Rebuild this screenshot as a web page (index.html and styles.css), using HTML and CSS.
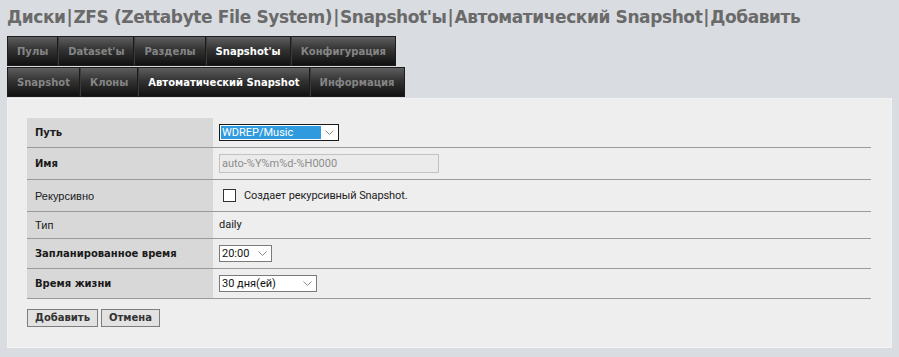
FILE: index.html
```html
<!DOCTYPE html>
<html lang="ru">
<head>
  <meta charset="UTF-8" />
  <title>Автоматический Snapshot - Добавить</title>
  <link rel="stylesheet" href="styles.css">
</head>
<body>
  <h1 class="page-title">Диски<span class="sep">|</span>ZFS (Zettabyte File System)<span class="sep">|</span>Snapshot'ы<span class="sep">|</span>Автоматический Snapshot<span class="sep">|</span>Добавить</h1>

  <div class="tabs">
    <ul class="tab-row">
      <li class="tab">Пулы</li>
      <li class="tab">Dataset'ы</li>
      <li class="tab">Разделы</li>
      <li class="tab active">Snapshot'ы</li>
      <li class="tab">Конфигурация</li>
    </ul>
    <ul class="tab-row">
      <li class="tab">Snapshot</li>
      <li class="tab">Клоны</li>
      <li class="tab active">Автоматический Snapshot</li>
      <li class="tab">Информация</li>
    </ul>
  </div>

  <div class="panel">
    <table class="form-table">
      <tr class="row-path">
        <td class="label bold">Путь</td>
        <td class="value">
          <div class="dropdown focused w-path">
            <span class="dd-value selected">WDREP/Music</span>
            <span class="dd-arrow"><svg width="9" height="5" viewBox="0 0 9 5"><path d="M0.5 0.5 L4.5 4.5 L8.5 0.5" fill="none" stroke="#8a8a8a" stroke-width="1"/></svg></span>
          </div>
        </td>
      </tr>
      <tr class="row-name">
        <td class="label bold">Имя</td>
        <td class="value">
          <input class="text-input" type="text" value="auto-%Y%m%d-%H0000" disabled>
        </td>
      </tr>
      <tr class="row-rec">
        <td class="label">Рекурсивно</td>
        <td class="value">
          <label class="check"><span class="check-box"></span>Создает рекурсивный Snapshot.</label>
        </td>
      </tr>
      <tr class="row-type">
        <td class="label">Тип</td>
        <td class="value plain">daily</td>
      </tr>
      <tr class="row-time">
        <td class="label bold">Запланированное время</td>
        <td class="value">
          <div class="dropdown w-time">
            <span class="dd-value">20:00</span>
            <span class="dd-arrow"><svg width="9" height="5" viewBox="0 0 9 5"><path d="M0.5 0.5 L4.5 4.5 L8.5 0.5" fill="none" stroke="#8a8a8a" stroke-width="1"/></svg></span>
          </div>
        </td>
      </tr>
      <tr class="row-life">
        <td class="label bold">Время жизни</td>
        <td class="value">
          <div class="dropdown w-life">
            <span class="dd-value">30 дня(ей)</span>
            <span class="dd-arrow"><svg width="9" height="5" viewBox="0 0 9 5"><path d="M0.5 0.5 L4.5 4.5 L8.5 0.5" fill="none" stroke="#8a8a8a" stroke-width="1"/></svg></span>
          </div>
        </td>
      </tr>
    </table>

    <div class="actions">
      <button class="btn">Добавить</button>
      <button class="btn">Отмена</button>
    </div>
  </div>
</body>
</html>
```

FILE: styles.css
```css
* {
  box-sizing: border-box;
}

body {
  margin: 0;
  padding: 6px 7px 0 7px;
  background-color: #d9dce0;
  font-family: "DejaVu Sans", Verdana, sans-serif;
  color: #222;
}

/* Заголовок */
.page-title {
  margin: 0;
  font-size: 17px;
  line-height: 22px;
  letter-spacing: -0.4px;
  font-weight: bold;
  color: #6a6a6a;
  white-space: nowrap;
}

.page-title .sep {
  margin: 0 1px;
}

/* Вкладки */
.tabs {
  margin-top: 8px;
}

.tab-row {
  display: flex;
  list-style: none;
  margin: 0 0 1px 0;
  padding: 0;
}

.tab {
  height: 30px;
  padding: 0 9px;
  display: flex;
  align-items: center;
  font-size: 10px;
  font-weight: bold;
  color: #858585;
  background: linear-gradient(to bottom, #5e5e5e 0%, #333 45%, #111 100%);
  border: 1px solid #1c1c1c;
  border-left-color: #3a3a3a;
  white-space: nowrap;
}

.tab:first-child {
  border-left-color: #1c1c1c;
}

.tab.active {
  color: #fff;
}

/* Панель */
.panel {
  background-color: #eeeeee;
  border: 1px solid #f3f3f3;
  padding: 19px 20px 20px 19px;
}

.form-table {
  width: 100%;
  border-collapse: collapse;
}

.form-table td {
  border-bottom: 1px solid #9a9a9a;
  padding: 6px;
  vertical-align: middle;
  font-size: 10px;
  line-height: 14px;
}

.form-table .label {
  width: 186px;
  background-color: #d8d8d8;
  padding-left: 8px;
  color: #1a1a1a;
}

.form-table .label.bold {
  font-weight: bold;
}

.form-table .label:not(.bold) {
  font-family: "Liberation Sans", Arial, sans-serif;
  font-size: 11px;
}

.row-path td { height: 29px; }
.row-name td { height: 32px; }
.row-rec td { height: 32px; }
.row-type td { height: 27px; }
.row-time td { height: 29px; }
.row-life td { height: 29px; }

.value {
  font-family: Roboto, "Noto Sans", sans-serif;
}

.value.plain {
  font-size: 11px;
  color: #1a1a1a;
}

/* Выпадающие списки */
.dropdown {
  display: flex;
  align-items: center;
  height: 17px;
  border: 1px solid #7a7a7a;
  background-color: #fff;
  padding: 1px;
  font-family: Roboto, "Noto Sans", sans-serif;
  font-size: 11px;
  line-height: 13px;
  color: #111;
}

.dropdown.focused {
  border-color: #1a1a1a;
}

.w-path { width: 120px; }
.w-time { width: 53px; }
.w-life { width: 98px; }

.dd-value {
  flex: 1;
  height: 13px;
  line-height: 13px;
  padding-left: 1px;
  white-space: nowrap;
}

.dd-value.selected {
  background-color: #2f9ade;
  color: #fff;
}

.dd-arrow {
  width: 16px;
  display: flex;
  align-items: center;
  justify-content: center;
}

.text-input {
  display: block;
  width: 220px;
  height: 19px;
  margin: 0;
  padding: 0 2px;
  border: 1px solid #c2c2c2;
  background-color: #ebebeb;
  color: #8c8c8c;
  font-family: Roboto, "Noto Sans", sans-serif;
  font-size: 11px;
}

.check {
  display: flex;
  align-items: center;
  gap: 8px;
  padding-left: 4px;
  font-size: 11px;
  letter-spacing: -0.1px;
  color: #222;
}

.check-box {
  width: 13px;
  height: 13px;
  border: 1px solid #333;
  background-color: #fff;
}

/* Кнопки */
.actions {
  display: flex;
  gap: 3px;
  margin-top: 10px;
}

.btn {
  height: 18px;
  padding: 0 7px;
  border: 1px solid #7d7d7d;
  background-color: #e2e2e2;
  font-family: "DejaVu Sans", Verdana, sans-serif;
  font-size: 10px;
  font-weight: bold;
  color: #333;
  line-height: 14px;
}
```
